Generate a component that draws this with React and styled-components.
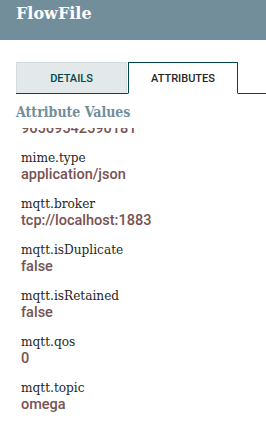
import React from "react"
import styled, { createGlobalStyle } from "styled-components"

// first entry is scrolled mostly out of view, only the tail of its value shows
const attributes = [
  { name: "filename", value: "96569542590181" },
  { name: "mime.type", value: "application/json" },
  { name: "mqtt.broker", value: "tcp://localhost:1883" },
  { name: "mqtt.isDuplicate", value: "false" },
  { name: "mqtt.isRetained", value: "false" },
  { name: "mqtt.qos", value: "0" },
  { name: "mqtt.topic", value: "omega" },
]

const App = () => {
  const [scrolledPast, ...visible] = attributes
  return (
    <Wrapper>
      <GlobalStyle />
      <Header>
        <Title>FlowFile</Title>
      </Header>
      <Tabs>
        <Tab>DETAILS</Tab>
        <Tab active>ATTRIBUTES</Tab>
      </Tabs>
      <Heading>Attribute Values</Heading>
      <List>
        <Scrolled>
          <Item>
            <Value>{scrolledPast.value}</Value>
          </Item>
          {visible.map(attr => (
            <Item key={attr.name}>
              <Name>{attr.name}</Name>
              <Value>{attr.value}</Value>
            </Item>
          ))}
        </Scrolled>
      </List>
    </Wrapper>
  )
}

export default App

const GlobalStyle = createGlobalStyle`
  html, body {
    margin: 0;
    padding: 0;
    background: #ffffff;
  }
`

const Wrapper = styled.div`
  width: 266px;
  height: 446px;
  overflow: hidden;
  background: #ffffff;
`

const Header = styled.div`
  height: 40px;
  box-sizing: border-box;
  padding: 2px 16px 0;
  background: #728e9b;
`

const Title = styled.div`
  font-family: "DejaVu Serif", serif;
  font-weight: bold;
  font-size: 16px;
  line-height: 24px;
  color: #ffffff;
`

const Tabs = styled.div`
  display: flex;
  align-items: flex-end;
  gap: 1px;
  margin: 21px 0 0 16px;
  height: 32px;
  border-bottom: 1px solid #004849;
`

const Tab = styled.div`
  width: ${p => (p.active ? "110px" : "111px")};
  height: ${p => (p.active ? "32px" : "31px")};
  box-sizing: border-box;
  margin-bottom: ${p => (p.active ? "-1px" : "0")};
  display: flex;
  align-items: center;
  justify-content: center;
  border: 1px solid ${p => (p.active ? "#004849" : "#d3dce0")};
  border-bottom: ${p => (p.active ? "1px solid #ffffff" : "none")};
  background: ${p => (p.active ? "#ffffff" : "#e3e8eb")};
  font-family: Roboto, "Liberation Sans", sans-serif;
  font-weight: 500;
  font-size: 11px;
  color: ${p => (p.active ? "#262626" : "#004849")};
`

const Heading = styled.div`
  margin: 9px 0 0 16px;
  font-family: "DejaVu Serif", serif;
  font-stretch: condensed;
  font-weight: bold;
  font-size: 14px;
  line-height: 19px;
  color: #728e9b;
`

const List = styled.div`
  margin-top: 6px;
  height: 318px;
  overflow: hidden;
  padding-left: 21px;
`

const Scrolled = styled.div`
  display: flex;
  flex-direction: column;
  gap: 12px;
  margin-top: -8px;
`

const Item = styled.div`
  display: flex;
  flex-direction: column;
`

const Name = styled.div`
  font-family: "DejaVu Serif", serif;
  font-stretch: condensed;
  font-size: 13.5px;
  line-height: 17px;
  color: #262626;
`

const Value = styled.div`
  font-family: Roboto, "Liberation Sans", sans-serif;
  font-weight: 500;
  font-size: 14.5px;
  line-height: 17px;
  color: #775351;
`
